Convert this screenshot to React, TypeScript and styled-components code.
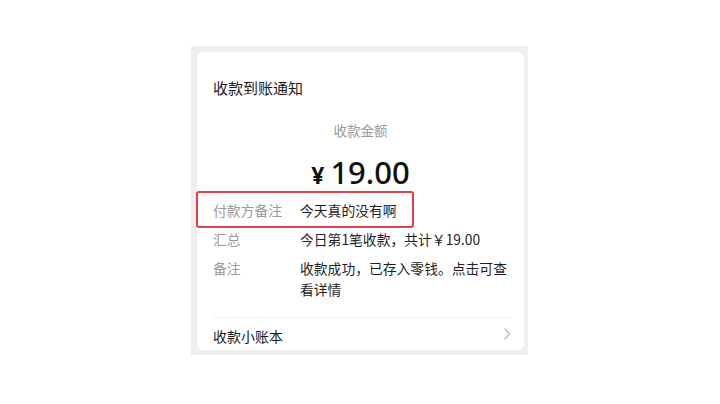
import React from "react";
import styled, { createGlobalStyle } from "styled-components";

const Global = createGlobalStyle`
  html, body { margin: 0; padding: 0; background: #ffffff; }
  body { font-family: "Noto Sans CJK SC", "Noto Sans", sans-serif; }
`;

const Page = styled.div`
  width: 720px;
  height: 404px;
  display: flex;
  align-items: center;
  justify-content: center;
`;

const Frame = styled.div`
  width: 337px;
  height: 309px;
  box-sizing: border-box;
  padding: 6px 4px 5px 6px;
  background: #efefef;
  display: flex;
  margin-left: -1px;
  margin-top: -3px;
`;

const Card = styled.div`
  position: relative;
  flex: 1;
  background: #ffffff;
  border-radius: 6px;
  display: flex;
  flex-direction: column;
  padding: 0 12px 0 16px;
`;

const Title = styled.div`
  margin-top: 26px;
  font-size: 15px;
  line-height: 20px;
  color: #1b1b1b;
`;

const SubTitle = styled.div`
  margin-top: 22px;
  text-align: center;
  font-size: 13.5px;
  line-height: 20px;
  color: #9b9b9b;
  padding-right: 4px;
`;

const Amount = styled.div`
  margin-top: 12px;
  height: 40px;
  display: flex;
  align-items: baseline;
  justify-content: center;
  gap: 6px;
  color: #111;
  font-family: "Noto Sans", sans-serif;
  padding-right: 4px;
`;

const Yen = styled.span`
  font-size: 23px;
  font-weight: 700;
  line-height: 40px;
`;

const Digits = styled.span`
  font-size: 31px;
  font-weight: 500;
  line-height: 40px;
`;

const Rows = styled.div`
  margin-top: 8px;
  display: flex;
  flex-direction: column;
  gap: 8px;
`;

const Row = styled.div`
  display: grid;
  grid-template-columns: 87px 1fr;
  font-size: 13.8px;
  line-height: 21px;
`;

const Label = styled.div`
  color: #9a9a9a;
`;

const Value = styled.div`
  color: #1e1e1e;
`;

const Footer = styled.div`
  margin-top: auto;
  border-top: 1px solid #efefef;
  box-sizing: border-box;
  height: 33px;
  padding-top: 3px;
  display: flex;
  align-items: center;
  justify-content: space-between;
  font-size: 14px;
  color: #1b1b1b;
`;

const Chevron = styled.svg`
  width: 8px;
  height: 14px;
  margin-right: 1px;
  margin-top: -3px;
`;

const Highlight = styled.div`
  position: absolute;
  left: -1px;
  top: 139px;
  width: 218px;
  height: 37px;
  box-sizing: border-box;
  border: 2px solid #d9434a;
  border-radius: 3px;
  pointer-events: none;
`;

const rows = [
  { label: "付款方备注", value: "今天真的没有啊" },
  { label: "汇总", value: "今日第1笔收款，共计￥19.00" },
  { label: "备注", value: "收款成功，已存入零钱。点击可查看详情" },
];

export default function App() {
  return (
    <>
      <Global />
      <Page>
        <Frame>
          <Card>
            <Title>收款到账通知</Title>
            <SubTitle>收款金额</SubTitle>
            <Amount>
              <Yen>¥</Yen>
              <Digits>19.00</Digits>
            </Amount>
            <Rows>
              {rows.map((r) => (
                <Row key={r.label}>
                  <Label>{r.label}</Label>
                  <Value>{r.value}</Value>
                </Row>
              ))}
            </Rows>
            <Footer>
              <span>收款小账本</span>
              <Chevron viewBox="0 0 8 14">
                <path d="M1.5 1.5 L6.5 7 L1.5 12.5" fill="none" stroke="#b9b9b9" strokeWidth="1.3" />
              </Chevron>
            </Footer>
            <Highlight />
          </Card>
        </Frame>
      </Page>
    </>
  );
}
